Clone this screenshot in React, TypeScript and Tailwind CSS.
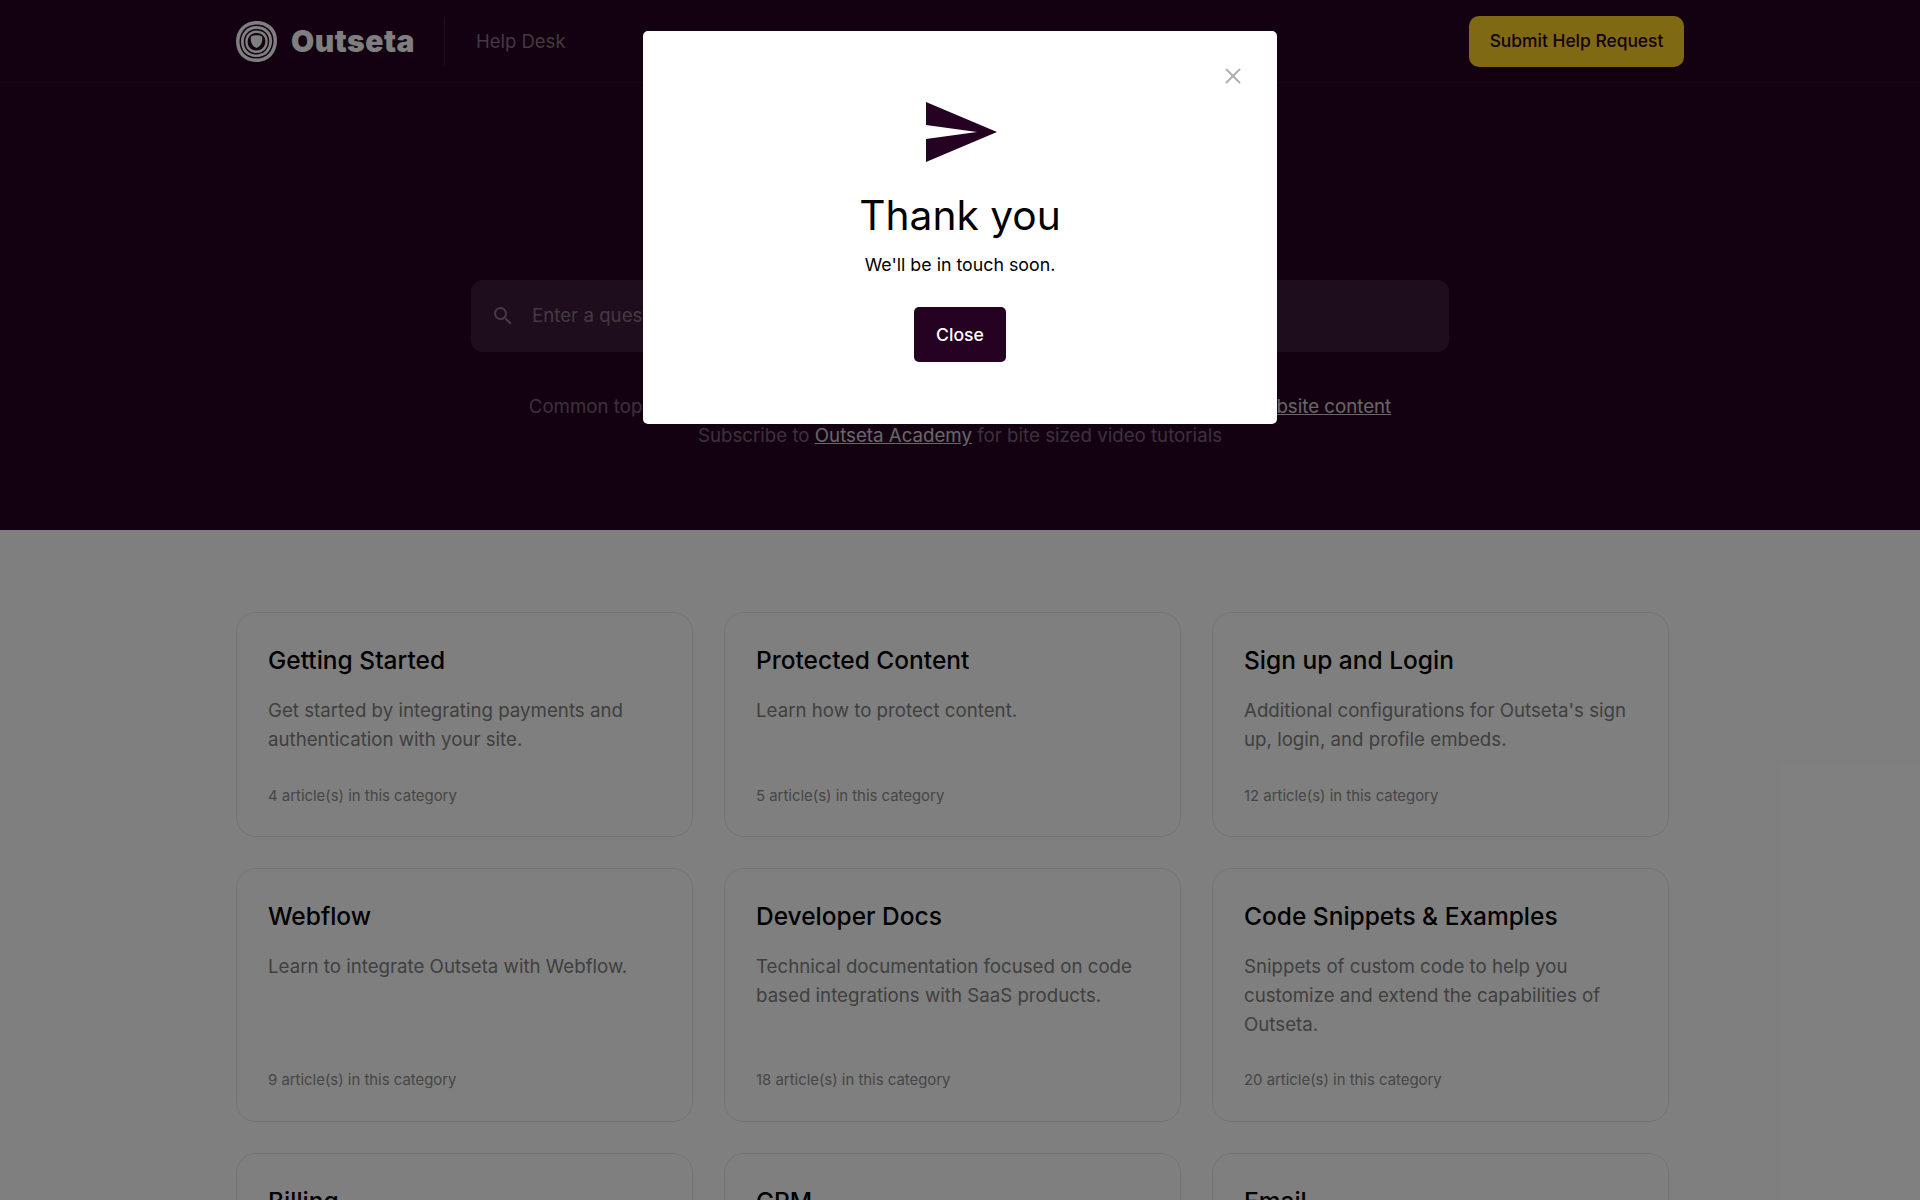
import { X } from "lucide-react";

interface Category {
    title: string;
    description: string;
    count: number;
}

const categories: Category[] = [
    { title: "Getting Started", description: "Get started by integrating payments and authentication with your site.", count: 4 },
    { title: "Protected Content", description: "Learn how to protect content.", count: 5 },
    { title: "Sign up and Login", description: "Additional configurations for Outseta's sign up, login, and profile embeds.", count: 12 },
    { title: "Webflow", description: "Learn to integrate Outseta with Webflow.", count: 9 },
    { title: "Developer Docs", description: "Technical documentation focused on code based integrations with SaaS products.", count: 18 },
    { title: "Code Snippets & Examples", description: "Snippets of custom code to help you customize and extend the capabilities of Outseta.", count: 20 },
    { title: "Billing", description: "Manage plans, invoices and subscriptions.", count: 14 },
    { title: "CRM", description: "Keep track of your people and accounts.", count: 11 },
    { title: "Email", description: "Send transactional and marketing email.", count: 16 },
];

const BLOB = "M20 0C31 0 40 7 40 19C40 31 32 40 20 40C8 40 0 32 0 20C0 8 9 0 20 0Z";

function OutsetaMark() {
    return (
        <svg width="41" height="41" viewBox="0 0 40 40" className="shrink-0">
            <path d={BLOB} fill="#ffffff" />
            <path d={BLOB} fill="#260222" transform="translate(3.4 3.4) scale(0.83)" />
            <path d={BLOB} fill="#ffffff" transform="translate(4.8 4.8) scale(0.76)" />
            <path d={BLOB} fill="#260222" transform="translate(7.6 7.8) scale(0.62)" />
            <path d={BLOB} fill="#ffffff" transform="translate(9 9.2) scale(0.55)" />
            <path d={BLOB} fill="#260222" transform="translate(11.4 11.6) scale(0.43)" />
            <path d="M14.6 15C17.4 13.6 22.6 13.6 25.4 15C26.4 19 24.8 24.6 20 26.4C15.2 24.6 13.6 19 14.6 15Z" fill="#ffffff" />
        </svg>
    );
}

function SearchIcon() {
    return (
        <svg width="24" height="24" viewBox="0 0 24 24" fill="currentColor" className="shrink-0 text-white/40">
            <path d="M15.5 14h-.79l-.28-.27A6.47 6.47 0 0 0 16 9.5 6.5 6.5 0 1 0 9.5 16c1.61 0 3.09-.59 4.23-1.57l.27.28v.79l5 4.99L20.49 19l-4.99-5zm-6 0C7.01 14 5 11.99 5 9.5S7.01 5 9.5 5 14 7.01 14 9.5 11.99 14 9.5 14z" />
        </svg>
    );
}

function CategoryCard({ title, description, count }: Category) {
    return (
        <div className="flex flex-col rounded-[20px] border border-black/10 px-[31px] pt-[29px] pb-[28.5px]">
            <h3 className="text-[24.5px] leading-[36px] font-medium text-black">{title}</h3>
            <p className="mt-[19px] text-[18.7px] leading-[28.8px] text-[#808080]">{description}</p>
            <div className="mt-auto pt-[29px] text-[14.9px] leading-[24px] text-[#8c8c8c]">{count} article(s) in this category</div>
        </div>
    );
}

export default function App() {
    return (
        <div className="relative h-screen overflow-hidden bg-white font-['Inter',sans-serif]">
            <div className="bg-[#260222]">
                <header className="flex h-[83px] items-center justify-between border-b border-white/5 px-[236px]">
                    <div className="flex items-center">
                        <OutsetaMark />
                        <span className="ml-[14px] text-[30px] leading-none font-black tracking-[0.5px] text-white">Outseta</span>
                        <div className="ml-[29px] h-[49px] w-px bg-white/10" />
                        <span className="ml-[31px] pt-[1px] text-[18.5px] text-white/45">Help Desk</span>
                    </div>
                    <button type="button" className="h-[51px] w-[215px] rounded-[10px] bg-[#ffd324] text-[17.4px] font-medium text-[#260222]">
                        Submit Help Request
                    </button>
                </header>
                <section className="flex h-[447px] flex-col items-center pt-[197px]">
                    <div className="flex h-[72px] w-[978px] items-center rounded-[12px] bg-white/10 pl-[20px]">
                        <SearchIcon />
                        <span className="ml-[17px] pt-[1px] text-[18.7px] text-white/40">Enter a question, keyword or topic...</span>
                    </div>
                    <div className="mt-[40px] text-center text-[18.7px] leading-[29px] text-white/40">
                        <p>
                            Common topics: Getting started, sign up and login embeds, pricing plans,{" "}
                            <a className="text-white/80 underline">Protect website content</a>
                        </p>
                        <p>
                            Subscribe to <a className="text-white/80 underline">Outseta Academy</a> for bite sized video tutorials
                        </p>
                    </div>
                </section>
            </div>
            <main className="pt-[82px]">
                <div className="ml-[236px] grid w-[1433px] grid-cols-3 gap-x-[31px] gap-y-[31px]">
                    {categories.map((category) => (
                        <CategoryCard key={category.title} {...category} />
                    ))}
                </div>
            </main>

            <div className="absolute inset-0 flex justify-center bg-black/50 pt-[31px]">
                <div className="relative flex h-[393px] w-[634px] flex-col items-center rounded-[5px] bg-white pt-[71px]">
                    <button type="button" className="absolute top-[32px] right-[31px] text-[#b0b0b0]">
                        <X size={26} strokeWidth={1.8} />
                    </button>
                    <svg width="71" height="60" viewBox="0 0 71 60" className="ml-[2px]">
                        <path d="M0 0L71 30L0 60V37L51 30L0 23Z" fill="#260222" />
                    </svg>
                    <h2 className="mt-[28px] text-[40.7px] leading-[52px] text-black">Thank you</h2>
                    <p className="mt-[9px] text-[17.8px] leading-[28px] text-black">We'll be in touch soon.</p>
                    <button type="button" className="mt-[28px] h-[55px] w-[92px] rounded-[5px] bg-[#260222] pt-[2px] text-[17.6px] font-medium text-white">
                        Close
                    </button>
                </div>
            </div>
        </div>
    );
}
